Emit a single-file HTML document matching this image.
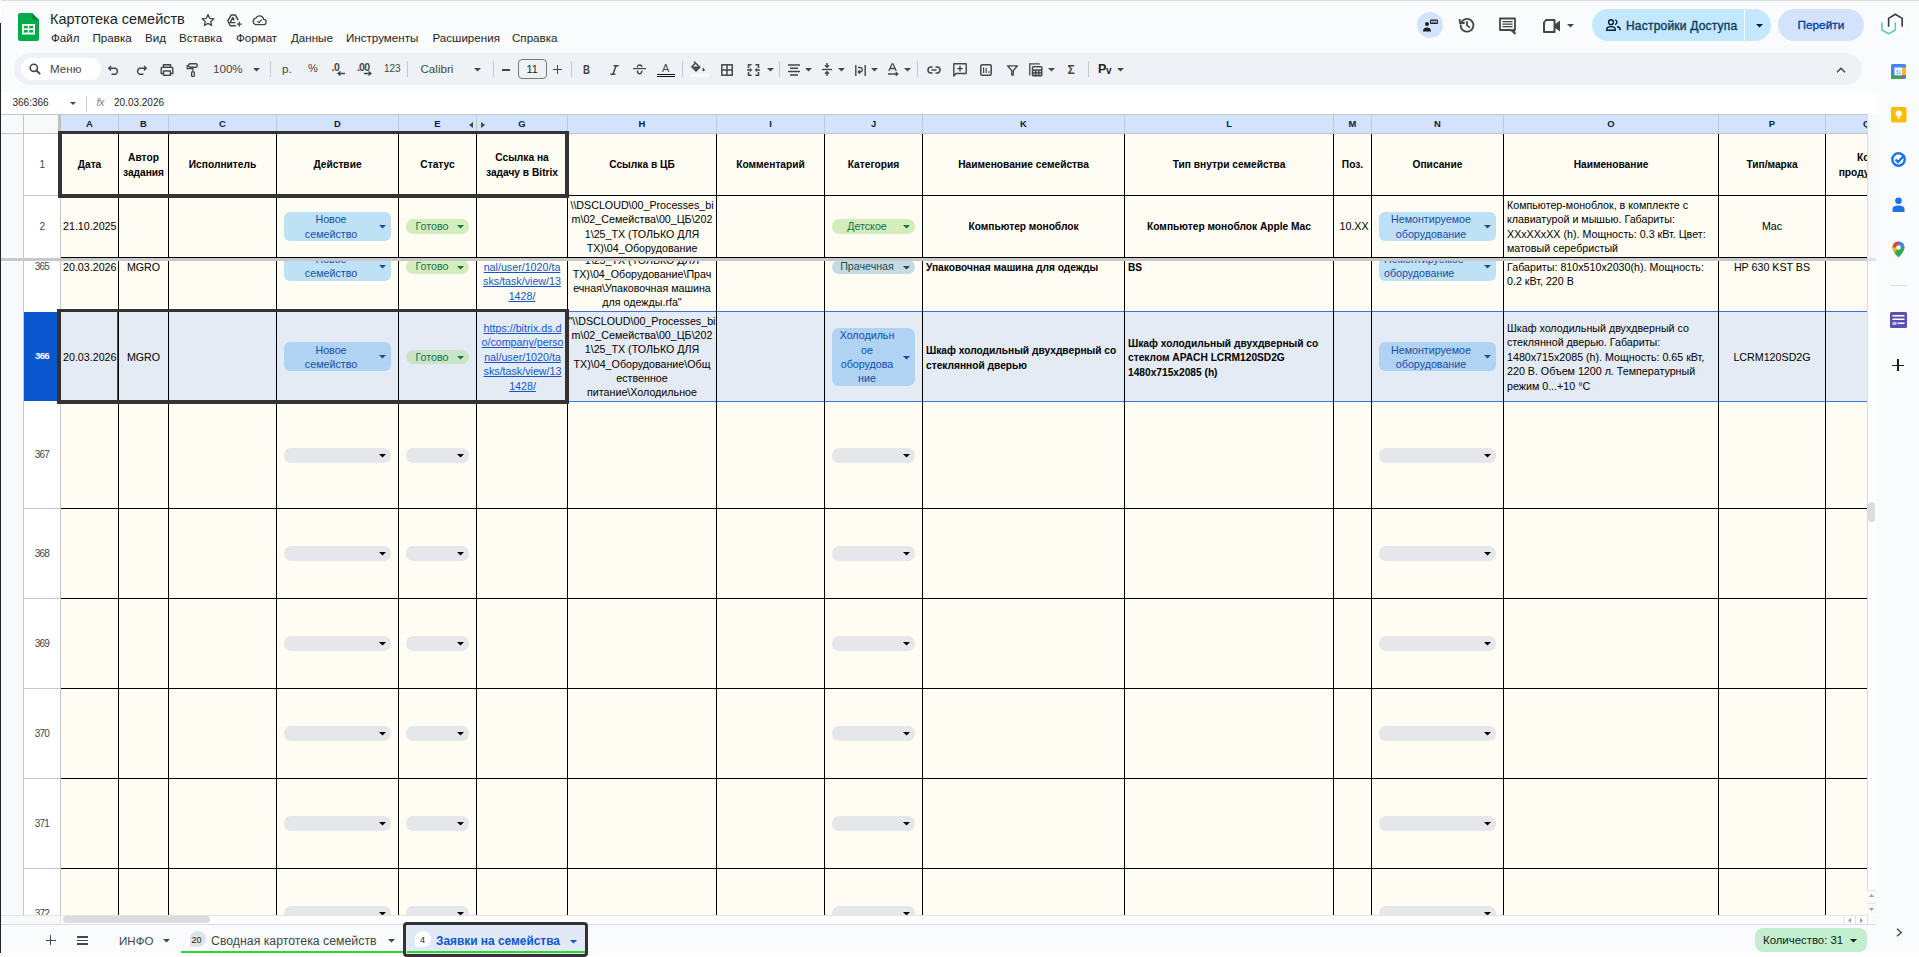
<!DOCTYPE html><html><head><meta charset="utf-8"><style>
html,body{margin:0;padding:0;}
body{width:1919px;height:957px;overflow:hidden;position:relative;background:#f9fbfd;font-family:"Liberation Sans",sans-serif;}
div{position:absolute;box-sizing:border-box;}
.t{white-space:pre;line-height:1;}
svg{position:absolute;overflow:visible;}
</style></head><body>
<div style="left:1px;top:0px;width:1918px;height:1px;background:#dedcdc"></div>
<div style="left:0px;top:0px;width:1px;height:23px;background:#fff"></div>
<svg style="left:18px;top:13px" width="21" height="28" viewBox="0 0 21 28">
<path d="M2 0H14L21 7V26Q21 28 19 28H2Q0 28 0 26V2Q0 0 2 0Z" fill="#00ac47"/>
<path d="M14 0L21 7H16Q14 7 14 5Z" fill="#008a34"/>
<rect x="4" y="11" width="13" height="10.5" fill="#fff"/>
<rect x="5.8" y="12.8" width="4" height="2.6" fill="#00ac47"/><rect x="11.2" y="12.8" width="4" height="2.6" fill="#00ac47"/>
<rect x="5.8" y="17" width="4" height="2.6" fill="#00ac47"/><rect x="11.2" y="17" width="4" height="2.6" fill="#00ac47"/>
</svg>
<div class="t" style="left:50px;top:12px;font-size:14.5px;color:#1f1f1f">Картотека семейств</div>
<svg style="left:201px;top:13px" width="14" height="14" viewBox="0 0 24 24"><path d="M12 2.5l2.9 6.6 7.1.6-5.4 4.7 1.6 7-6.2-3.7-6.2 3.7 1.6-7L2 9.7l7.1-.6z" fill="none" stroke="#444746" stroke-width="2.2" stroke-linejoin="round"/></svg>
<svg style="left:227px;top:14px" width="15" height="13" viewBox="0 0 15 13"><path d="M11.2 6.2L8.3 0.9H4.3L0.9 6.6L3.2 11.8H9" fill="none" stroke="#444746" stroke-width="1.5" stroke-linejoin="round"/><path d="M7.2 6.4L5.7 3.6L3.2 8.6H8.5" fill="none" stroke="#444746" stroke-width="1.4" stroke-linejoin="round"/><path d="M12.3 7.8V12.6M9.9 10.2H14.7" stroke="#444746" stroke-width="1.3"/></svg>
<svg style="left:252px;top:15px" width="15" height="10" viewBox="0 0 24 17"><path d="M6 16.5h12.5a4.5 4.5 0 0 0 .5-9 7 7 0 0 0-13.3-2A5.6 5.6 0 0 0 6 16.5z" fill="none" stroke="#444746" stroke-width="2.2"/><path d="M8.5 10.5l2.5 2.5 5-5" fill="none" stroke="#444746" stroke-width="2"/></svg>
<div class="t" style="left:51px;top:32px;font-size:11.6px;color:#1f1f1f">Файл</div>
<div class="t" style="left:92.5px;top:32px;font-size:11.6px;color:#1f1f1f">Правка</div>
<div class="t" style="left:145px;top:32px;font-size:11.6px;color:#1f1f1f">Вид</div>
<div class="t" style="left:179px;top:32px;font-size:11.6px;color:#1f1f1f">Вставка</div>
<div class="t" style="left:236px;top:32px;font-size:11.6px;color:#1f1f1f">Формат</div>
<div class="t" style="left:291px;top:32px;font-size:11.6px;color:#1f1f1f">Данные</div>
<div class="t" style="left:346px;top:32px;font-size:11.6px;color:#1f1f1f">Инструменты</div>
<div class="t" style="left:432.5px;top:32px;font-size:11.6px;color:#1f1f1f">Расширения</div>
<div class="t" style="left:512px;top:32px;font-size:11.6px;color:#1f1f1f">Справка</div>
<div style="left:1417px;top:12px;width:26px;height:26px;border-radius:13px;background:#d3e3fd"></div>
<svg style="left:1423px;top:19px" width="15" height="13" viewBox="0 0 15 13"><circle cx="4" cy="5" r="2" fill="#1f1f1f"/><path d="M0 12.5Q0 8.5 4 8.5Q8 8.5 8 12.5Z" fill="#1f1f1f"/><rect x="7" y="0.5" width="8" height="4.5" rx="1" fill="#1f1f1f"/><rect x="8.2" y="1.7" width="1.5" height="2" fill="#d3e3fd"/><rect x="10.3" y="1.7" width="1.5" height="2" fill="#d3e3fd"/><rect x="12.4" y="1.7" width="1.5" height="2" fill="#d3e3fd"/></svg>
<svg style="left:1458px;top:16px" width="18" height="18" viewBox="0 0 24 24"><path d="M4.2 9A8.5 8.5 0 1 1 3.5 12" fill="none" stroke="#444746" stroke-width="2.4"/><path d="M1.5 5.5V11H7" fill="none" stroke="#444746" stroke-width="0"/><path d="M2 4l1 6 6-1" fill="none" stroke="#444746" stroke-width="2.4" stroke-linejoin="round"/><path d="M12 7v5.5l4 3" fill="none" stroke="#444746" stroke-width="2.4"/></svg>
<svg style="left:1499px;top:17px" width="17" height="17" viewBox="0 0 17 17"><path d="M1 1.5h15v11.5h-2l2 3.5-4-3.5H1z" fill="none" stroke="#444746" stroke-width="1.8" stroke-linejoin="round"/><rect x="3.5" y="4" width="10" height="1.3" fill="#444746"/><rect x="3.5" y="6.5" width="10" height="1.3" fill="#444746"/><rect x="3.5" y="9" width="10" height="1.3" fill="#444746"/></svg>
<svg style="left:1542px;top:19px" width="19" height="14" viewBox="0 0 19 14"><path d="M4 1h8.5v12H2V3.5z" fill="none" stroke="#444746" stroke-width="2" stroke-linejoin="round"/><path d="M12.5 5.5L18 1.5v11l-5.5-4z" fill="#444746"/></svg>
<svg style="left:1567px;top:24px" width="7" height="4" viewBox="0 0 7 4"><path d="M0 0h7L3.5 3.5z" fill="#444746"/></svg>
<div style="left:1592px;top:9px;width:179px;height:32px;border-radius:16px;background:#c2e7ff"></div>
<div style="left:1744px;top:9px;width:1px;height:32px;background:#f4fbff"></div>
<svg style="left:1606px;top:19px" width="15" height="12" viewBox="0 0 15 12"><circle cx="5" cy="3.2" r="2.4" fill="none" stroke="#001d35" stroke-width="1.4"/><path d="M0.8 11.3V10Q0.8 7.6 5 7.6Q9.2 7.6 9.2 10V11.3Z" fill="none" stroke="#001d35" stroke-width="1.4"/><path d="M9 0.9A2.4 2.4 0 0 1 9 5.6M11 7.8Q14 8.2 14 10V11.3" fill="none" stroke="#001d35" stroke-width="1.4"/></svg>
<div class="t" style="left:1626px;top:19.5px;font-size:12px;color:#0b3a5a;letter-spacing:0.2px;-webkit-text-stroke:0.35px #0b3a5a">Настройки Доступа</div>
<svg style="left:1756px;top:23.5px" width="7" height="4" viewBox="0 0 7 4"><path d="M0 0h7L3.5 3.5z" fill="#001d35"/></svg>
<div style="left:1778px;top:9px;width:86px;height:32px;border-radius:16px;background:#d3e3fd"></div>
<div class="t" style="left:1797.5px;top:19.5px;font-size:11.8px;color:#0842a0;-webkit-text-stroke:0.35px #0842a0">Перейти</div>
<div style="left:1878.5px;top:11.5px;width:26.5px;height:26.5px;border-radius:13.25px;background:#ffffff"></div>
<svg style="left:1879px;top:11px" width="26" height="26" viewBox="0 0 26 26"><path d="M9.6 15.7V7.4L16.3 3.2L23.2 7.4V15.7" fill="none" stroke="#2f3b43" stroke-width="1.6"/><path d="M2.9 11.3V19L9.6 22.8L16.3 19V11.3" fill="none" stroke="#5bc7d3" stroke-width="1.6"/></svg>
<div style="left:14px;top:53px;width:1848px;height:32px;border-radius:16px;background:#eef2f7"></div>
<div style="left:21px;top:58px;width:80px;height:22px;border-radius:11px;background:#fff"></div>
<svg style="left:29px;top:63px" width="12" height="12" viewBox="0 0 12 12"><circle cx="4.8" cy="4.8" r="3.6" fill="none" stroke="#444746" stroke-width="1.6"/><path d="M7.5 7.5L11.2 11.2" stroke="#444746" stroke-width="1.8"/></svg>
<div class="t" style="left:50px;top:63px;font-size:11.6px;color:#444746">Меню</div>
<svg style="left:108px;top:65px" width="12" height="10" viewBox="0 0 12 10"><path d="M3 1L0.8 3.3 3 5.6" fill="none" stroke="#444746" stroke-width="1.5"/><path d="M1 3.3H7.5A3.2 3.2 0 0 1 7.5 9.2H3.5" fill="none" stroke="#444746" stroke-width="1.5"/></svg>
<svg style="left:135px;top:65px" width="12" height="10" viewBox="0 0 12 10" ><g transform="translate(12,0) scale(-1,1)"><path d="M3 1L0.8 3.3 3 5.6" fill="none" stroke="#444746" stroke-width="1.5"/><path d="M1 3.3H7.5A3.2 3.2 0 0 1 7.5 9.2H3.5" fill="none" stroke="#444746" stroke-width="1.5"/></g></svg>
<svg style="left:160px;top:64px" width="14" height="12" viewBox="0 0 14 12"><path d="M3.5 3V0.8H10.5V3" fill="none" stroke="#444746" stroke-width="1.4"/><path d="M3 9.5H1.2V4.5Q1.2 3.2 2.5 3.2H11.5Q12.8 3.2 12.8 4.5V9.5H11" fill="none" stroke="#444746" stroke-width="1.4"/><rect x="3.6" y="7" width="6.8" height="4.3" fill="none" stroke="#444746" stroke-width="1.4"/></svg>
<svg style="left:186px;top:63px" width="12" height="14" viewBox="0 0 12 14"><rect x="2.7" y="0.8" width="8.5" height="3.4" rx="1.1" fill="none" stroke="#444746" stroke-width="1.4"/><path d="M2.7 2.5H1.1V5.6H6.9V8.6" fill="none" stroke="#444746" stroke-width="1.2"/><rect x="5.6" y="8.9" width="2.7" height="4.4" rx="0.6" fill="none" stroke="#444746" stroke-width="1.3"/></svg>
<div class="t" style="left:213px;top:63px;font-size:11.6px;color:#444746">100%</div>
<svg style="left:253px;top:68px" width="7" height="4" viewBox="0 0 7 4"><path d="M0 0h7L3.5 3.5z" fill="#444746"/></svg>
<div style="left:270px;top:61px;width:1px;height:16px;background:#c7c7c7"></div>
<div class="t" style="left:282px;top:63px;font-size:11.6px;color:#444746">р.</div>
<div class="t" style="left:308px;top:63px;font-size:11px;color:#444746">%</div>
<div class="t" style="left:331.5px;top:62px;font-size:10.5px;color:#444746;font-weight:bold;letter-spacing:-0.5px">.0</div>
<svg style="left:337px;top:71px" width="8" height="5" viewBox="0 0 8 5"><path d="M8 2.5H1.5M3.5 0.5L1 2.5 3.5 4.5" fill="none" stroke="#444746" stroke-width="1.3"/></svg>
<div class="t" style="left:357px;top:62px;font-size:10.5px;color:#444746;font-weight:bold;letter-spacing:-0.8px">.00</div>
<svg style="left:364px;top:71px" width="8" height="5" viewBox="0 0 8 5"><path d="M0 2.5H6.5M4.5 0.5L7 2.5 4.5 4.5" fill="none" stroke="#444746" stroke-width="1.3"/></svg>
<div class="t" style="left:384px;top:64px;font-size:10px;color:#444746">123</div>
<div style="left:407px;top:61px;width:1px;height:16px;background:#c7c7c7"></div>
<div class="t" style="left:420.5px;top:63px;font-size:11.6px;color:#444746">Calibri</div>
<svg style="left:474px;top:68px" width="7" height="4" viewBox="0 0 7 4"><path d="M0 0h7L3.5 3.5z" fill="#444746"/></svg>
<div style="left:493px;top:61px;width:1px;height:16px;background:#c7c7c7"></div>
<div style="left:502px;top:69px;width:8px;height:1.5px;background:#444746"></div>
<div style="left:518px;top:59px;width:29px;height:20px;border:1px solid #747775;border-radius:4px"></div>
<div class="t" style="left:526.5px;top:64px;font-size:11px;color:#1f1f1f">11</div>
<div style="left:553px;top:68.5px;width:9px;height:1.5px;background:#444746"></div>
<div style="left:556.8px;top:64.8px;width:1.5px;height:9px;background:#444746"></div>
<div style="left:571px;top:61px;width:1px;height:16px;background:#c7c7c7"></div>
<div class="t" style="left:583px;top:62.5px;font-size:13px;font-weight:bold;color:#444746;transform:scaleX(0.74);transform-origin:left top">B</div>
<svg style="left:609.5px;top:65px" width="9" height="10" viewBox="0 0 9 10"><path d="M3.6 0.7H8.7M0.3 9.3H5.4M6.1 0.7L2.9 9.3" fill="none" stroke="#444746" stroke-width="1.5"/></svg>
<svg style="left:633px;top:64px" width="13" height="11" viewBox="0 0 13 11"><path d="M0 4.6H13" stroke="#444746" stroke-width="1.2"/><path d="M4.4 3.4Q4.4 1 6.6 1Q8.8 1 8.8 3" fill="none" stroke="#444746" stroke-width="1.4"/><path d="M4.4 6.6Q4.4 9.9 6.6 9.9Q8.8 9.9 8.8 6.8" fill="none" stroke="#444746" stroke-width="1.4"/></svg>
<div class="t" style="left:662px;top:62.5px;font-size:11px;color:#444746">A</div>
<div style="left:657px;top:73.8px;width:18px;height:1.3px;background:#111"></div>
<div style="left:657px;top:76px;width:18px;height:1.3px;background:#111"></div>
<div style="left:682px;top:61px;width:1px;height:16px;background:#c7c7c7"></div>
<svg style="left:691px;top:60px" width="15" height="12" viewBox="0 0 15 12"><path d="M3 1.5L8.8 7.3 5 11 0.8 6.8 4.6 3" fill="none" stroke="#444746" stroke-width="1.4"/><path d="M1.5 6.5H9L5 10.5z" fill="#444746"/><path d="M12.5 7.5Q11.3 9.3 11.3 10Q11.3 11.3 12.5 11.3Q13.7 11.3 13.7 10Q13.7 9.3 12.5 7.5z" fill="#444746"/></svg>
<div style="left:690px;top:74px;width:19px;height:3px;background:#fffbf2"></div>
<svg style="left:721px;top:64px" width="12" height="12" viewBox="0 0 12 12"><rect x="0.8" y="0.8" width="10.4" height="10.4" fill="none" stroke="#444746" stroke-width="1.5"/><path d="M6 0.8V11.2M0.8 6H11.2" stroke="#444746" stroke-width="1.5"/></svg>
<svg style="left:747px;top:64px" width="13" height="12" viewBox="0 0 13 12"><path d="M4.6 0.7H1.5V4M1.5 8V11.3H4.6M8.4 0.7H11.5V4M11.5 8V11.3H8.4" fill="none" stroke="#444746" stroke-width="1.5"/><path d="M0 6H3M13 6H10" stroke="#444746" stroke-width="1.3"/><path d="M2.8 3.8L5.2 6 2.8 8.2zM10.2 3.8L7.8 6 10.2 8.2z" fill="#444746"/></svg>
<svg style="left:767px;top:68px" width="7" height="4" viewBox="0 0 7 4"><path d="M0 0h7L3.5 3.5z" fill="#444746"/></svg>
<div style="left:779px;top:61px;width:1px;height:16px;background:#c7c7c7"></div>
<svg style="left:788px;top:64px" width="12" height="12" viewBox="0 0 12 12"><path d="M0 1H12M2 4.3H10M0 7.6H12M2 10.9H10" stroke="#444746" stroke-width="1.5"/></svg>
<svg style="left:805px;top:68px" width="7" height="4" viewBox="0 0 7 4"><path d="M0 0h7L3.5 3.5z" fill="#444746"/></svg>
<svg style="left:822px;top:63px" width="10" height="13" viewBox="0 0 10 13"><path d="M0 6.5H10" stroke="#444746" stroke-width="1.4"/><path d="M5 0V4M3 2.3L5 4.3 7 2.3M5 13V9M3 10.7L5 8.7 7 10.7" fill="none" stroke="#444746" stroke-width="1.4"/></svg>
<svg style="left:838px;top:68px" width="7" height="4" viewBox="0 0 7 4"><path d="M0 0h7L3.5 3.5z" fill="#444746"/></svg>
<svg style="left:855px;top:65px" width="11" height="11" viewBox="0 0 11 11"><path d="M0.8 0V11M10.2 0V11" stroke="#444746" stroke-width="1.4"/><path d="M3 2.5H5.5A2.3 2.3 0 0 1 5.5 7H3.5M5 5.3L3.3 7 5 8.7" fill="none" stroke="#444746" stroke-width="1.3"/></svg>
<svg style="left:871px;top:68px" width="7" height="4" viewBox="0 0 7 4"><path d="M0 0h7L3.5 3.5z" fill="#444746"/></svg>
<svg style="left:888px;top:63px" width="11" height="13" viewBox="0 0 11 13"><path d="M0.8 8L4 0.8H5L8.2 8M2 5.5H7" fill="none" stroke="#444746" stroke-width="1.3"/><path d="M0 11H9.5M7.8 9.3L9.7 11 7.8 12.7" fill="none" stroke="#444746" stroke-width="1.3"/></svg>
<svg style="left:904px;top:68px" width="7" height="4" viewBox="0 0 7 4"><path d="M0 0h7L3.5 3.5z" fill="#444746"/></svg>
<div style="left:917px;top:61px;width:1px;height:16px;background:#c7c7c7"></div>
<svg style="left:927px;top:66px" width="14" height="8" viewBox="0 0 14 8"><path d="M5.5 1H4A3 3 0 0 0 4 7H5.5M8.5 1H10A3 3 0 0 1 10 7H8.5M4.5 4H9.5" fill="none" stroke="#444746" stroke-width="1.5"/></svg>
<svg style="left:953px;top:63px" width="14" height="14" viewBox="0 0 14 14"><path d="M0.8 0.8H13.2V10.5H3L0.8 13z" fill="none" stroke="#444746" stroke-width="1.4" stroke-linejoin="round"/><path d="M7 2.8V8.5M4.2 5.6H9.8" stroke="#444746" stroke-width="1.4"/></svg>
<svg style="left:980px;top:64px" width="12" height="12" viewBox="0 0 12 12"><rect x="0.8" y="0.8" width="10.4" height="10.4" rx="1.3" fill="none" stroke="#444746" stroke-width="1.5"/><path d="M3.6 3.6V9M6.2 4V9M8.9 7.2V9" stroke="#444746" stroke-width="1.2"/></svg>
<svg style="left:1007px;top:65px" width="11" height="10" viewBox="0 0 11 10"><path d="M0.5 0.8H10.5L6.3 5.5V10H4.7V5.5z" fill="none" stroke="#444746" stroke-width="1.3" stroke-linejoin="round"/></svg>
<svg style="left:1029px;top:63px" width="14" height="14" viewBox="0 0 14 14"><path d="M0.8 12.5V0.8H10.8" fill="none" stroke="#444746" stroke-width="1.3"/><rect x="2.8" y="3" width="10.7" height="10.5" rx="1.5" fill="#444746"/><rect x="4.2" y="4.4" width="7.9" height="1.9" fill="#eef2f7"/><rect x="4.4" y="7.8" width="1.4" height="1.3" fill="#eef2f7"/><rect x="7.45" y="7.8" width="1.4" height="1.3" fill="#eef2f7"/><rect x="10.5" y="7.8" width="1.4" height="1.3" fill="#eef2f7"/><rect x="4.4" y="10.5" width="1.4" height="1.3" fill="#eef2f7"/><rect x="7.45" y="10.5" width="1.4" height="1.3" fill="#eef2f7"/><rect x="10.5" y="10.5" width="1.4" height="1.3" fill="#eef2f7"/></svg>
<svg style="left:1048px;top:68px" width="7" height="4" viewBox="0 0 7 4"><path d="M0 0h7L3.5 3.5z" fill="#444746"/></svg>
<div class="t" style="left:1067.5px;top:64px;font-size:12px;color:#444746;font-weight:bold">Σ</div>
<div style="left:1088px;top:61px;width:1px;height:16px;background:#c7c7c7"></div>
<div class="t" style="left:1098px;top:62.5px;font-size:12.5px;font-weight:bold;color:#1f1f1f">Р</div>
<div class="t" style="left:1106px;top:65.5px;font-size:10px;font-weight:bold;color:#1f1f1f">v</div>
<svg style="left:1117px;top:68px" width="7" height="4" viewBox="0 0 7 4"><path d="M0 0h7L3.5 3.5z" fill="#444746"/></svg>
<svg style="left:1836px;top:67px" width="10" height="6" viewBox="0 0 10 6"><path d="M1 5.2L5 1.2 9 5.2" fill="none" stroke="#444746" stroke-width="1.5"/></svg>
<div style="left:1px;top:92px;width:1875px;height:22px;background:#fff"></div>
<div class="t" style="left:12.5px;top:98px;font-size:10px;color:#1f1f1f">366:366</div>
<svg style="left:70px;top:102px" width="6" height="3.5" viewBox="0 0 7 4"><path d="M0 0h7L3.5 3.5z" fill="#444746"/></svg>
<div style="left:86px;top:97px;width:1px;height:14px;background:#c7c7c7"></div>
<div class="t" style="left:96.5px;top:97px;font-size:11px;font-style:italic;color:#80868b;letter-spacing:-0.5px">fx</div>
<div class="t" style="left:114px;top:98px;font-size:10px;color:#1f1f1f">20.03.2026</div>
<div style="left:0;top:0;width:1919px;height:957px;overflow:hidden">
<div style="left:1px;top:114px;width:22px;height:801px;background:#f8f9fa"></div>
<div style="left:23px;top:114px;width:1px;height:801px;background:#c4c7c5"></div>
<div style="left:24px;top:134px;width:36px;height:781px;background:#fff"></div>
<div style="left:24px;top:115px;width:36px;height:18px;background:#f8f9fa"></div>
<div style="left:61px;top:115px;width:1806px;height:18px;background:#d3e3fd"></div>
<div style="left:58px;top:115px;width:3px;height:18px;background:#c0c0c0"></div>
<div style="left:1px;top:114px;width:1866px;height:1px;background:#c4c7c5"></div>
<div style="left:1px;top:133px;width:1866px;height:1px;background:#c4c7c5"></div>
<div style="left:60px;top:134px;width:1px;height:781px;background:#c4c7c5"></div>
<div style="left:61px;top:134px;width:1806px;height:781px;background:#fefcf3"></div>
<div style="left:61px;top:312px;width:1806px;height:89px;background:#e5ebf4"></div>
<div style="left:61px;top:311px;width:1806px;height:1px;background:#3a74e2"></div>
<div style="left:61px;top:401px;width:1806px;height:1px;background:#3a74e2"></div>
<div style="left:24px;top:312px;width:33px;height:89px;background:#0b57d0"></div>
<div style="left:118px;top:115px;width:1px;height:18px;background:#c4c7c5"></div>
<div style="left:168px;top:115px;width:1px;height:18px;background:#c4c7c5"></div>
<div style="left:276px;top:115px;width:1px;height:18px;background:#c4c7c5"></div>
<div style="left:398px;top:115px;width:1px;height:18px;background:#c4c7c5"></div>
<div style="left:476px;top:115px;width:1px;height:18px;background:#c4c7c5"></div>
<div style="left:567px;top:115px;width:1px;height:18px;background:#c4c7c5"></div>
<div style="left:716px;top:115px;width:1px;height:18px;background:#c4c7c5"></div>
<div style="left:824px;top:115px;width:1px;height:18px;background:#c4c7c5"></div>
<div style="left:922px;top:115px;width:1px;height:18px;background:#c4c7c5"></div>
<div style="left:1124px;top:115px;width:1px;height:18px;background:#c4c7c5"></div>
<div style="left:1333px;top:115px;width:1px;height:18px;background:#c4c7c5"></div>
<div style="left:1371px;top:115px;width:1px;height:18px;background:#c4c7c5"></div>
<div style="left:1503px;top:115px;width:1px;height:18px;background:#c4c7c5"></div>
<div style="left:1718px;top:115px;width:1px;height:18px;background:#c4c7c5"></div>
<div style="left:1825px;top:115px;width:1px;height:18px;background:#c4c7c5"></div>
<div style="left:118px;top:134px;width:1px;height:781px;background:#000"></div>
<div style="left:168px;top:134px;width:1px;height:781px;background:#000"></div>
<div style="left:276px;top:134px;width:1px;height:781px;background:#000"></div>
<div style="left:398px;top:134px;width:1px;height:781px;background:#000"></div>
<div style="left:476px;top:134px;width:1px;height:781px;background:#000"></div>
<div style="left:567px;top:134px;width:1px;height:781px;background:#000"></div>
<div style="left:716px;top:134px;width:1px;height:781px;background:#000"></div>
<div style="left:824px;top:134px;width:1px;height:781px;background:#000"></div>
<div style="left:922px;top:134px;width:1px;height:781px;background:#000"></div>
<div style="left:1124px;top:134px;width:1px;height:781px;background:#000"></div>
<div style="left:1333px;top:134px;width:1px;height:781px;background:#000"></div>
<div style="left:1371px;top:134px;width:1px;height:781px;background:#000"></div>
<div style="left:1503px;top:134px;width:1px;height:781px;background:#000"></div>
<div style="left:1718px;top:134px;width:1px;height:781px;background:#000"></div>
<div style="left:1825px;top:134px;width:1px;height:781px;background:#000"></div>
<div style="left:61px;top:195px;width:1806px;height:1px;background:#000"></div>
<div style="left:61px;top:257px;width:1806px;height:1px;background:#000"></div>
<div style="left:61px;top:508px;width:1806px;height:1px;background:#000"></div>
<div style="left:61px;top:598px;width:1806px;height:1px;background:#000"></div>
<div style="left:61px;top:688px;width:1806px;height:1px;background:#000"></div>
<div style="left:61px;top:778px;width:1806px;height:1px;background:#000"></div>
<div style="left:61px;top:868px;width:1806px;height:1px;background:#000"></div>
<div style="left:24px;top:195px;width:36px;height:1px;background:#c4c7c5"></div>
<div style="left:24px;top:508px;width:36px;height:1px;background:#c4c7c5"></div>
<div style="left:24px;top:598px;width:36px;height:1px;background:#c4c7c5"></div>
<div style="left:24px;top:688px;width:36px;height:1px;background:#c4c7c5"></div>
<div style="left:24px;top:778px;width:36px;height:1px;background:#c4c7c5"></div>
<div style="left:24px;top:868px;width:36px;height:1px;background:#c4c7c5"></div>
<div style="left:1px;top:258px;width:1875px;height:3px;background:#c8c8c8"></div>
<div style="left:117px;top:312px;width:1px;height:89px;background:#0b57d0"></div>
<div class="t" style="left:69.50px;top:119.04px;width:40px;text-align:center;font-size:9.4px;font-weight:bold;color:#041e49">A</div>
<div class="t" style="left:123.50px;top:119.04px;width:40px;text-align:center;font-size:9.4px;font-weight:bold;color:#041e49">B</div>
<div class="t" style="left:202.50px;top:119.04px;width:40px;text-align:center;font-size:9.4px;font-weight:bold;color:#041e49">C</div>
<div class="t" style="left:317.50px;top:119.04px;width:40px;text-align:center;font-size:9.4px;font-weight:bold;color:#041e49">D</div>
<div class="t" style="left:417.50px;top:119.04px;width:40px;text-align:center;font-size:9.4px;font-weight:bold;color:#041e49">E</div>
<div class="t" style="left:502.00px;top:119.04px;width:40px;text-align:center;font-size:9.4px;font-weight:bold;color:#041e49">G</div>
<div class="t" style="left:622.00px;top:119.04px;width:40px;text-align:center;font-size:9.4px;font-weight:bold;color:#041e49">H</div>
<div class="t" style="left:750.50px;top:119.04px;width:40px;text-align:center;font-size:9.4px;font-weight:bold;color:#041e49">I</div>
<div class="t" style="left:853.50px;top:119.04px;width:40px;text-align:center;font-size:9.4px;font-weight:bold;color:#041e49">J</div>
<div class="t" style="left:1003.50px;top:119.04px;width:40px;text-align:center;font-size:9.4px;font-weight:bold;color:#041e49">K</div>
<div class="t" style="left:1209.00px;top:119.04px;width:40px;text-align:center;font-size:9.4px;font-weight:bold;color:#041e49">L</div>
<div class="t" style="left:1332.50px;top:119.04px;width:40px;text-align:center;font-size:9.4px;font-weight:bold;color:#041e49">M</div>
<div class="t" style="left:1417.50px;top:119.04px;width:40px;text-align:center;font-size:9.4px;font-weight:bold;color:#041e49">N</div>
<div class="t" style="left:1591.00px;top:119.04px;width:40px;text-align:center;font-size:9.4px;font-weight:bold;color:#041e49">O</div>
<div class="t" style="left:1752.00px;top:119.04px;width:40px;text-align:center;font-size:9.4px;font-weight:bold;color:#041e49">P</div>
<svg style="left:469px;top:122px" width="4" height="6" viewBox="0 0 4 6"><path d="M4 0V6L0 3z" fill="#444746"/></svg>
<svg style="left:481px;top:122px" width="4" height="6" viewBox="0 0 4 6"><path d="M0 0V6L4 3z" fill="#444746"/></svg>
<div class="t" style="left:27.00px;top:159.53px;width:30px;text-align:center;font-size:10px;color:#444746;letter-spacing:-0.8px">1</div>
<div class="t" style="left:27.00px;top:221.53px;width:30px;text-align:center;font-size:10px;color:#444746;letter-spacing:-0.8px">2</div>
<div class="t" style="left:27.00px;top:449.54px;width:30px;text-align:center;font-size:10px;color:#444746;letter-spacing:-0.8px">367</div>
<div class="t" style="left:27.00px;top:548.53px;width:30px;text-align:center;font-size:10px;color:#444746;letter-spacing:-0.8px">368</div>
<div class="t" style="left:27.00px;top:638.53px;width:30px;text-align:center;font-size:10px;color:#444746;letter-spacing:-0.8px">369</div>
<div class="t" style="left:27.00px;top:728.53px;width:30px;text-align:center;font-size:10px;color:#444746;letter-spacing:-0.8px">370</div>
<div class="t" style="left:27.00px;top:818.53px;width:30px;text-align:center;font-size:10px;color:#444746;letter-spacing:-0.8px">371</div>
<div class="t" style="left:27.00px;top:908.53px;width:30px;text-align:center;font-size:10px;color:#444746;letter-spacing:-0.8px">372</div>
<div class="t" style="left:27.00px;top:261.54px;width:30px;text-align:center;font-size:10px;color:#444746;letter-spacing:-0.8px">365</div>
<div class="t" style="left:27.00px;top:351.17px;width:30px;text-align:center;font-size:9.6px;color:#fff;font-weight:bold;letter-spacing:-0.6px">366</div>
<div class="t" style="left:59.50px;top:160.17px;width:60px;text-align:center;font-size:10.2px;font-weight:bold;color:#000">Дата</div>
<div class="t" style="left:113.50px;top:153.17px;width:60px;text-align:center;font-size:10.2px;font-weight:bold;color:#000">Автор</div>
<div class="t" style="left:113.50px;top:167.67px;width:60px;text-align:center;font-size:10.2px;font-weight:bold;color:#000">задания</div>
<div class="t" style="left:167.50px;top:160.17px;width:110px;text-align:center;font-size:10.2px;font-weight:bold;color:#000">Исполнитель</div>
<div class="t" style="left:277.50px;top:160.17px;width:120px;text-align:center;font-size:10.2px;font-weight:bold;color:#000">Действие</div>
<div class="t" style="left:397.50px;top:160.17px;width:80px;text-align:center;font-size:10.2px;font-weight:bold;color:#000">Статус</div>
<div class="t" style="left:477.00px;top:153.17px;width:90px;text-align:center;font-size:10.2px;font-weight:bold;color:#000">Ссылка на</div>
<div class="t" style="left:477.00px;top:167.67px;width:90px;text-align:center;font-size:10.2px;font-weight:bold;color:#000">задачу в Bitrix</div>
<div class="t" style="left:567.00px;top:160.17px;width:150px;text-align:center;font-size:10.2px;font-weight:bold;color:#000">Ссылка в ЦБ</div>
<div class="t" style="left:715.50px;top:160.17px;width:110px;text-align:center;font-size:10.2px;font-weight:bold;color:#000">Комментарий</div>
<div class="t" style="left:823.50px;top:160.17px;width:100px;text-align:center;font-size:10.2px;font-weight:bold;color:#000">Категория</div>
<div class="t" style="left:923.50px;top:160.17px;width:200px;text-align:center;font-size:10.2px;font-weight:bold;color:#000">Наименование семейства</div>
<div class="t" style="left:1129.00px;top:160.17px;width:200px;text-align:center;font-size:10.2px;font-weight:bold;color:#000">Тип внутри семейства</div>
<div class="t" style="left:1332.50px;top:160.17px;width:40px;text-align:center;font-size:10.2px;font-weight:bold;color:#000">Поз.</div>
<div class="t" style="left:1372.50px;top:160.17px;width:130px;text-align:center;font-size:10.2px;font-weight:bold;color:#000">Описание</div>
<div class="t" style="left:1506.00px;top:160.17px;width:210px;text-align:center;font-size:10.2px;font-weight:bold;color:#000">Наименование</div>
<div class="t" style="left:1717.00px;top:160.17px;width:110px;text-align:center;font-size:10.2px;font-weight:bold;color:#000">Тип/марка</div>
<div style="left:1826px;top:114px;width:41px;height:86px;overflow:hidden"><div style="left:-1826px;top:-114px;width:1919px;height:957px">
<div class="t" style="left:1863.00px;top:119.04px;font-size:9.4px;font-weight:bold;color:#041e49">Q</div>
<div class="t" style="left:1857.00px;top:153.17px;font-size:10.2px;font-weight:bold;color:#000">Кол-во</div>
<div class="t" style="left:1838.70px;top:167.67px;font-size:10.2px;font-weight:bold;color:#000">продукции</div>
</div></div>
<div class="t" style="left:63.00px;top:220.94px;font-size:10.7px;color:#000">21.10.2025</div>
<div style="left:284px;top:212px;width:107px;height:29px;border-radius:6px;background:#bfe1f6"></div>
<svg style="left:378.5px;top:225.0px" width="7" height="4" viewBox="0 0 7 4"><path d="M0 0h7L3.5 3.5z" fill="#174ea6"/></svg>
<div class="t" style="left:261.00px;top:213.74px;width:140px;text-align:center;font-size:10.7px;color:#174ea6">Новое</div>
<div class="t" style="left:261.00px;top:228.74px;width:140px;text-align:center;font-size:10.7px;color:#174ea6">семейство</div>
<div style="left:406px;top:219px;width:63px;height:15px;border-radius:7px;background:#d4edbc"></div>
<svg style="left:456.5px;top:225.0px" width="7" height="4" viewBox="0 0 7 4"><path d="M0 0h7L3.5 3.5z" fill="#11734b"/></svg>
<div class="t" style="left:362.00px;top:220.94px;width:140px;text-align:center;font-size:10.7px;color:#11734b">Готово</div>
<div class="t" style="left:562.00px;top:199.94px;width:160px;text-align:center;font-size:10.7px;color:#000">\\DSCLOUD\00_Processes_bi</div>
<div class="t" style="left:562.00px;top:214.44px;width:160px;text-align:center;font-size:10.7px;color:#000">m\02_Семейства\00_ЦБ\202</div>
<div class="t" style="left:562.00px;top:228.94px;width:160px;text-align:center;font-size:10.7px;color:#000">1\25_TX (ТОЛЬКО ДЛЯ</div>
<div class="t" style="left:562.00px;top:243.44px;width:160px;text-align:center;font-size:10.7px;color:#000">TX)\04_Оборудование</div>
<div style="left:832px;top:219px;width:83px;height:15px;border-radius:7px;background:#d4edbc"></div>
<svg style="left:902.5px;top:225.0px" width="7" height="4" viewBox="0 0 7 4"><path d="M0 0h7L3.5 3.5z" fill="#11734b"/></svg>
<div class="t" style="left:797.00px;top:220.94px;width:140px;text-align:center;font-size:10.7px;color:#11734b">Детское</div>
<div class="t" style="left:923.50px;top:222.17px;width:200px;text-align:center;font-size:10.2px;font-weight:bold;color:#000">Компьютер моноблок</div>
<div class="t" style="left:1125.00px;top:222.17px;width:208px;text-align:center;font-size:10.2px;font-weight:bold;color:#000">Компьютер моноблок Apple Mac</div>
<div class="t" style="left:1339.50px;top:220.94px;font-size:10.7px;color:#000">10.XX</div>
<div style="left:1379px;top:212px;width:117px;height:29px;border-radius:6px;background:#bfe1f6"></div>
<svg style="left:1483.5px;top:225.0px" width="7" height="4" viewBox="0 0 7 4"><path d="M0 0h7L3.5 3.5z" fill="#174ea6"/></svg>
<div class="t" style="left:1361.00px;top:213.74px;width:140px;text-align:center;font-size:10.7px;color:#174ea6">Немонтируемое</div>
<div class="t" style="left:1361.00px;top:228.74px;width:140px;text-align:center;font-size:10.7px;color:#174ea6">оборудование</div>
<div class="t" style="left:1507.00px;top:199.94px;font-size:10.7px;color:#000">Компьютер-моноблок, в комплекте с</div>
<div class="t" style="left:1507.00px;top:214.44px;font-size:10.7px;color:#000">клавиатурой и мышью. Габариты:</div>
<div class="t" style="left:1507.00px;top:228.94px;font-size:10.7px;color:#000">XXxXXxXX (h). Мощность: 0.3 кВт. Цвет:</div>
<div class="t" style="left:1507.00px;top:243.44px;font-size:10.7px;color:#000">матовый серебристый</div>
<div class="t" style="left:1722.00px;top:220.94px;width:100px;text-align:center;font-size:10.7px;color:#000">Mac</div>
<div style="left:0px;top:261px;width:1867px;height:50px;overflow:hidden"><div style="left:0px;top:-261px;width:1919px;height:957px">
<div class="t" style="left:63.00px;top:261.94px;font-size:10.7px;color:#000">20.03.2026</div>
<div class="t" style="left:118.50px;top:261.94px;width:50px;text-align:center;font-size:10.7px;color:#000">MGRO</div>
<div style="left:284px;top:252px;width:107px;height:29px;border-radius:6px;background:#bfe1f6"></div>
<svg style="left:378.5px;top:265.0px" width="7" height="4" viewBox="0 0 7 4"><path d="M0 0h7L3.5 3.5z" fill="#174ea6"/></svg>
<div class="t" style="left:261.00px;top:253.94px;width:140px;text-align:center;font-size:10.7px;color:#174ea6">Новое</div>
<div class="t" style="left:261.00px;top:268.44px;width:140px;text-align:center;font-size:10.7px;color:#174ea6">семейство</div>
<div style="left:406px;top:260px;width:63px;height:14px;border-radius:7.0px;background:#d4edbc"></div>
<svg style="left:456.5px;top:265.5px" width="7" height="4" viewBox="0 0 7 4"><path d="M0 0h7L3.5 3.5z" fill="#11734b"/></svg>
<div class="t" style="left:362.00px;top:261.44px;width:140px;text-align:center;font-size:10.7px;color:#11734b">Готово</div>
<div class="t" style="left:472.00px;top:261.94px;width:100px;text-align:center;font-size:10.7px;color:#1155cc;text-decoration:underline">nal/user/1020/ta</div>
<div class="t" style="left:472.00px;top:276.44px;width:100px;text-align:center;font-size:10.7px;color:#1155cc;text-decoration:underline">sks/task/view/13</div>
<div class="t" style="left:472.00px;top:290.94px;width:100px;text-align:center;font-size:10.7px;color:#1155cc;text-decoration:underline">1428/</div>
<div class="t" style="left:562.00px;top:254.64px;width:160px;text-align:center;font-size:10.7px;color:#000">1\25_TX (ТОЛЬКО ДЛЯ</div>
<div class="t" style="left:562.00px;top:268.84px;width:160px;text-align:center;font-size:10.7px;color:#000">TX)\04_Оборудование\Прач</div>
<div class="t" style="left:562.00px;top:283.04px;width:160px;text-align:center;font-size:10.7px;color:#000">ечная\Упаковочная машина</div>
<div class="t" style="left:562.00px;top:297.24px;width:160px;text-align:center;font-size:10.7px;color:#000">для одежды.rfa"</div>
<div style="left:832px;top:260px;width:83px;height:14px;border-radius:7.0px;background:#c6dbe1"></div>
<svg style="left:902.5px;top:265.5px" width="7" height="4" viewBox="0 0 7 4"><path d="M0 0h7L3.5 3.5z" fill="#1d4c5a"/></svg>
<div class="t" style="left:797.00px;top:261.44px;width:140px;text-align:center;font-size:10.7px;color:#1d4c5a">Прачечная</div>
<div class="t" style="left:926.00px;top:263.17px;font-size:10.2px;font-weight:bold;color:#000">Упаковочная машина для одежды</div>
<div class="t" style="left:1128.00px;top:263.17px;font-size:10.2px;font-weight:bold;color:#000">BS</div>
<div style="left:1379px;top:252px;width:117px;height:29px;border-radius:6px;background:#bfe1f6"></div>
<svg style="left:1483.5px;top:265.0px" width="7" height="4" viewBox="0 0 7 4"><path d="M0 0h7L3.5 3.5z" fill="#174ea6"/></svg>
<div class="t" style="left:1384.00px;top:253.94px;font-size:10.7px;color:#174ea6">Немонтируемое</div>
<div class="t" style="left:1384.00px;top:268.44px;font-size:10.7px;color:#174ea6">оборудование</div>
<div class="t" style="left:1507.00px;top:261.94px;font-size:10.7px;color:#000">Габариты: 810x510x2030(h). Мощность:</div>
<div class="t" style="left:1507.00px;top:276.44px;font-size:10.7px;color:#000">0.2 кВт, 220 В</div>
<div class="t" style="left:1722.00px;top:261.94px;width:100px;text-align:center;font-size:10.7px;color:#000">HP 630 KST BS</div>
</div></div>
<div class="t" style="left:63.00px;top:351.94px;font-size:10.7px;color:#000">20.03.2026</div>
<div class="t" style="left:118.50px;top:351.94px;width:50px;text-align:center;font-size:10.7px;color:#000">MGRO</div>
<div style="left:284px;top:342px;width:107px;height:29px;border-radius:6px;background:#b0d3f3"></div>
<svg style="left:378.5px;top:355.0px" width="7" height="4" viewBox="0 0 7 4"><path d="M0 0h7L3.5 3.5z" fill="#174ea6"/></svg>
<div class="t" style="left:261.00px;top:345.24px;width:140px;text-align:center;font-size:10.7px;color:#174ea6">Новое</div>
<div class="t" style="left:261.00px;top:359.44px;width:140px;text-align:center;font-size:10.7px;color:#174ea6">семейство</div>
<div style="left:406px;top:350px;width:63px;height:14px;border-radius:7.0px;background:#c9e5c5"></div>
<svg style="left:456.5px;top:355.5px" width="7" height="4" viewBox="0 0 7 4"><path d="M0 0h7L3.5 3.5z" fill="#11734b"/></svg>
<div class="t" style="left:362.00px;top:351.94px;width:140px;text-align:center;font-size:10.7px;color:#11734b">Готово</div>
<div class="t" style="left:472.50px;top:322.94px;width:100px;text-align:center;font-size:10.7px;color:#1155cc;text-decoration:underline">https://bitrix.ds.d</div>
<div class="t" style="left:472.50px;top:337.44px;width:100px;text-align:center;font-size:10.7px;color:#1155cc;text-decoration:underline">o/company/perso</div>
<div class="t" style="left:472.50px;top:351.94px;width:100px;text-align:center;font-size:10.7px;color:#1155cc;text-decoration:underline">nal/user/1020/ta</div>
<div class="t" style="left:472.50px;top:366.44px;width:100px;text-align:center;font-size:10.7px;color:#1155cc;text-decoration:underline">sks/task/view/13</div>
<div class="t" style="left:472.50px;top:380.94px;width:100px;text-align:center;font-size:10.7px;color:#1155cc;text-decoration:underline">1428/</div>
<div class="t" style="left:562.00px;top:315.64px;width:160px;text-align:center;font-size:10.7px;color:#000">"\\DSCLOUD\00_Processes_bi</div>
<div class="t" style="left:562.00px;top:329.94px;width:160px;text-align:center;font-size:10.7px;color:#000">m\02_Семейства\00_ЦБ\202</div>
<div class="t" style="left:562.00px;top:344.24px;width:160px;text-align:center;font-size:10.7px;color:#000">1\25_TX (ТОЛЬКО ДЛЯ</div>
<div class="t" style="left:562.00px;top:358.54px;width:160px;text-align:center;font-size:10.7px;color:#000">TX)\04_Оборудование\Общ</div>
<div class="t" style="left:562.00px;top:372.84px;width:160px;text-align:center;font-size:10.7px;color:#000">ественное</div>
<div class="t" style="left:562.00px;top:387.14px;width:160px;text-align:center;font-size:10.7px;color:#000">питание\Холодильное</div>
<div style="left:832px;top:328px;width:83px;height:58px;border-radius:7px;background:#b0d3f3"></div>
<svg style="left:902.5px;top:355.5px" width="7" height="4" viewBox="0 0 7 4"><path d="M0 0h7L3.5 3.5z" fill="#0d4cb6"/></svg>
<div class="t" style="left:797.00px;top:330.34px;width:140px;text-align:center;font-size:10.7px;color:#0d4cb6">Холодильн</div>
<div class="t" style="left:797.00px;top:344.64px;width:140px;text-align:center;font-size:10.7px;color:#0d4cb6">ое</div>
<div class="t" style="left:797.00px;top:358.94px;width:140px;text-align:center;font-size:10.7px;color:#0d4cb6">оборудова</div>
<div class="t" style="left:797.00px;top:373.24px;width:140px;text-align:center;font-size:10.7px;color:#0d4cb6">ние</div>
<div class="t" style="left:926.00px;top:346.17px;font-size:10.2px;font-weight:bold;color:#000">Шкаф холодильный двухдверный со</div>
<div class="t" style="left:926.00px;top:360.67px;font-size:10.2px;font-weight:bold;color:#000">стеклянной дверью</div>
<div class="t" style="left:1128.00px;top:338.67px;font-size:10.2px;font-weight:bold;color:#000">Шкаф холодильный двухдверный со</div>
<div class="t" style="left:1128.00px;top:353.17px;font-size:10.2px;font-weight:bold;color:#000">стеклом APACH LCRM120SD2G</div>
<div class="t" style="left:1128.00px;top:367.67px;font-size:10.2px;font-weight:bold;color:#000">1480x715x2085 (h)</div>
<div style="left:1379px;top:342px;width:117px;height:29px;border-radius:6px;background:#b0d3f3"></div>
<svg style="left:1483.5px;top:355.0px" width="7" height="4" viewBox="0 0 7 4"><path d="M0 0h7L3.5 3.5z" fill="#174ea6"/></svg>
<div class="t" style="left:1361.00px;top:345.24px;width:140px;text-align:center;font-size:10.7px;color:#174ea6">Немонтируемое</div>
<div class="t" style="left:1361.00px;top:359.44px;width:140px;text-align:center;font-size:10.7px;color:#174ea6">оборудование</div>
<div class="t" style="left:1507.00px;top:322.94px;font-size:10.7px;color:#000">Шкаф холодильный двухдверный со</div>
<div class="t" style="left:1507.00px;top:337.44px;font-size:10.7px;color:#000">стеклянной дверью. Габариты:</div>
<div class="t" style="left:1507.00px;top:351.94px;font-size:10.7px;color:#000">1480x715x2085 (h). Мощность: 0.65 кВт,</div>
<div class="t" style="left:1507.00px;top:366.44px;font-size:10.7px;color:#000">220 В. Объем 1200 л. Температурный</div>
<div class="t" style="left:1507.00px;top:380.94px;font-size:10.7px;color:#000">режим 0...+10 °C</div>
<div class="t" style="left:1722.00px;top:351.94px;width:100px;text-align:center;font-size:10.7px;color:#000">LCRM120SD2G</div>
<div style="left:58px;top:131px;width:510.5px;height:3px;background:#333"></div>
<div style="left:58px;top:194px;width:510.5px;height:3.5px;background:#333"></div>
<div style="left:58px;top:131px;width:3.5px;height:66.5px;background:#333"></div>
<div style="left:565px;top:131px;width:3.5px;height:66.5px;background:#333"></div>
<div style="left:57px;top:309px;width:511.5px;height:3px;background:#333"></div>
<div style="left:57px;top:400px;width:511.5px;height:3.5px;background:#333"></div>
<div style="left:57px;top:309px;width:4px;height:94.5px;background:#333"></div>
<div style="left:565px;top:309px;width:3.5px;height:94.5px;background:#333"></div>
<div style="left:0px;top:402px;width:1867px;height:513px;overflow:hidden"><div style="left:0px;top:-402px;width:1919px;height:957px">
<div style="left:284px;top:447.5px;width:107px;height:15.0px;border-radius:7px;background:#e6e7ea"></div>
<svg style="left:378.5px;top:453.5px" width="7" height="4" viewBox="0 0 7 4"><path d="M0 0h7L3.5 3.5z" fill="#000"/></svg>
<div style="left:406px;top:447.5px;width:63px;height:15.0px;border-radius:7px;background:#e6e7ea"></div>
<svg style="left:456.5px;top:453.5px" width="7" height="4" viewBox="0 0 7 4"><path d="M0 0h7L3.5 3.5z" fill="#000"/></svg>
<div style="left:832px;top:447.5px;width:83px;height:15.0px;border-radius:7px;background:#e6e7ea"></div>
<svg style="left:902.5px;top:453.5px" width="7" height="4" viewBox="0 0 7 4"><path d="M0 0h7L3.5 3.5z" fill="#000"/></svg>
<div style="left:1379px;top:447.5px;width:117px;height:15.0px;border-radius:7px;background:#e6e7ea"></div>
<svg style="left:1483.5px;top:453.5px" width="7" height="4" viewBox="0 0 7 4"><path d="M0 0h7L3.5 3.5z" fill="#000"/></svg>
<div style="left:284px;top:546.0px;width:107px;height:15.0px;border-radius:7px;background:#e6e7ea"></div>
<svg style="left:378.5px;top:552.0px" width="7" height="4" viewBox="0 0 7 4"><path d="M0 0h7L3.5 3.5z" fill="#000"/></svg>
<div style="left:406px;top:546.0px;width:63px;height:15.0px;border-radius:7px;background:#e6e7ea"></div>
<svg style="left:456.5px;top:552.0px" width="7" height="4" viewBox="0 0 7 4"><path d="M0 0h7L3.5 3.5z" fill="#000"/></svg>
<div style="left:832px;top:546.0px;width:83px;height:15.0px;border-radius:7px;background:#e6e7ea"></div>
<svg style="left:902.5px;top:552.0px" width="7" height="4" viewBox="0 0 7 4"><path d="M0 0h7L3.5 3.5z" fill="#000"/></svg>
<div style="left:1379px;top:546.0px;width:117px;height:15.0px;border-radius:7px;background:#e6e7ea"></div>
<svg style="left:1483.5px;top:552.0px" width="7" height="4" viewBox="0 0 7 4"><path d="M0 0h7L3.5 3.5z" fill="#000"/></svg>
<div style="left:284px;top:636.0px;width:107px;height:15.0px;border-radius:7px;background:#e6e7ea"></div>
<svg style="left:378.5px;top:642.0px" width="7" height="4" viewBox="0 0 7 4"><path d="M0 0h7L3.5 3.5z" fill="#000"/></svg>
<div style="left:406px;top:636.0px;width:63px;height:15.0px;border-radius:7px;background:#e6e7ea"></div>
<svg style="left:456.5px;top:642.0px" width="7" height="4" viewBox="0 0 7 4"><path d="M0 0h7L3.5 3.5z" fill="#000"/></svg>
<div style="left:832px;top:636.0px;width:83px;height:15.0px;border-radius:7px;background:#e6e7ea"></div>
<svg style="left:902.5px;top:642.0px" width="7" height="4" viewBox="0 0 7 4"><path d="M0 0h7L3.5 3.5z" fill="#000"/></svg>
<div style="left:1379px;top:636.0px;width:117px;height:15.0px;border-radius:7px;background:#e6e7ea"></div>
<svg style="left:1483.5px;top:642.0px" width="7" height="4" viewBox="0 0 7 4"><path d="M0 0h7L3.5 3.5z" fill="#000"/></svg>
<div style="left:284px;top:726.0px;width:107px;height:15.0px;border-radius:7px;background:#e6e7ea"></div>
<svg style="left:378.5px;top:732.0px" width="7" height="4" viewBox="0 0 7 4"><path d="M0 0h7L3.5 3.5z" fill="#000"/></svg>
<div style="left:406px;top:726.0px;width:63px;height:15.0px;border-radius:7px;background:#e6e7ea"></div>
<svg style="left:456.5px;top:732.0px" width="7" height="4" viewBox="0 0 7 4"><path d="M0 0h7L3.5 3.5z" fill="#000"/></svg>
<div style="left:832px;top:726.0px;width:83px;height:15.0px;border-radius:7px;background:#e6e7ea"></div>
<svg style="left:902.5px;top:732.0px" width="7" height="4" viewBox="0 0 7 4"><path d="M0 0h7L3.5 3.5z" fill="#000"/></svg>
<div style="left:1379px;top:726.0px;width:117px;height:15.0px;border-radius:7px;background:#e6e7ea"></div>
<svg style="left:1483.5px;top:732.0px" width="7" height="4" viewBox="0 0 7 4"><path d="M0 0h7L3.5 3.5z" fill="#000"/></svg>
<div style="left:284px;top:816.0px;width:107px;height:15.0px;border-radius:7px;background:#e6e7ea"></div>
<svg style="left:378.5px;top:822.0px" width="7" height="4" viewBox="0 0 7 4"><path d="M0 0h7L3.5 3.5z" fill="#000"/></svg>
<div style="left:406px;top:816.0px;width:63px;height:15.0px;border-radius:7px;background:#e6e7ea"></div>
<svg style="left:456.5px;top:822.0px" width="7" height="4" viewBox="0 0 7 4"><path d="M0 0h7L3.5 3.5z" fill="#000"/></svg>
<div style="left:832px;top:816.0px;width:83px;height:15.0px;border-radius:7px;background:#e6e7ea"></div>
<svg style="left:902.5px;top:822.0px" width="7" height="4" viewBox="0 0 7 4"><path d="M0 0h7L3.5 3.5z" fill="#000"/></svg>
<div style="left:1379px;top:816.0px;width:117px;height:15.0px;border-radius:7px;background:#e6e7ea"></div>
<svg style="left:1483.5px;top:822.0px" width="7" height="4" viewBox="0 0 7 4"><path d="M0 0h7L3.5 3.5z" fill="#000"/></svg>
<div style="left:284px;top:906.0px;width:107px;height:15.0px;border-radius:7px;background:#e6e7ea"></div>
<svg style="left:378.5px;top:912.0px" width="7" height="4" viewBox="0 0 7 4"><path d="M0 0h7L3.5 3.5z" fill="#000"/></svg>
<div style="left:406px;top:906.0px;width:63px;height:15.0px;border-radius:7px;background:#e6e7ea"></div>
<svg style="left:456.5px;top:912.0px" width="7" height="4" viewBox="0 0 7 4"><path d="M0 0h7L3.5 3.5z" fill="#000"/></svg>
<div style="left:832px;top:906.0px;width:83px;height:15.0px;border-radius:7px;background:#e6e7ea"></div>
<svg style="left:902.5px;top:912.0px" width="7" height="4" viewBox="0 0 7 4"><path d="M0 0h7L3.5 3.5z" fill="#000"/></svg>
<div style="left:1379px;top:906.0px;width:117px;height:15.0px;border-radius:7px;background:#e6e7ea"></div>
<svg style="left:1483.5px;top:912.0px" width="7" height="4" viewBox="0 0 7 4"><path d="M0 0h7L3.5 3.5z" fill="#000"/></svg>
</div></div>
<div style="left:1867px;top:114px;width:9px;height:801px;background:#fff"></div>
<div style="left:1867px;top:114px;width:9px;height:147px;background:#f8f9fa"></div>
<div style="left:1867px;top:114px;width:1px;height:801px;background:#dadce0"></div>
<div style="left:1867px;top:258px;width:9px;height:3px;background:#dde3ea"></div>
<div style="left:1868px;top:502px;width:7px;height:20px;border-radius:3.5px;background:#dadce0"></div>
<div style="left:1867px;top:890px;width:9px;height:24px;background:#f8f9fa"></div>
<div style="left:1867px;top:890px;width:9px;height:1px;background:#e3e3e3"></div>
<div style="left:1867px;top:903px;width:9px;height:1px;background:#e3e3e3"></div>
<svg style="left:1869px;top:894px" width="5" height="3" viewBox="0 0 5 3"><path d="M0 3H5L2.5 0z" fill="#9aa0a6"/></svg>
<svg style="left:1869px;top:908px" width="5" height="3" viewBox="0 0 5 3"><path d="M0 0H5L2.5 3z" fill="#9aa0a6"/></svg>
</div>
<div style="left:1px;top:915px;width:1875px;height:9px;background:#fff"></div>
<div style="left:1px;top:915px;width:1875px;height:1px;background:#e3e3e3"></div>
<div style="left:1px;top:916px;width:59px;height:8px;background:#f8f9fa"></div>
<div style="left:60px;top:916px;width:1px;height:8px;background:#e3e3e3"></div>
<div style="left:63px;top:916px;width:147px;height:7px;border-radius:3.5px;background:#dadce0"></div>
<div style="left:1843px;top:915px;width:1px;height:9px;background:#e3e3e3"></div>
<div style="left:1855px;top:915px;width:1px;height:9px;background:#e3e3e3"></div>
<div style="left:1867px;top:915px;width:9px;height:9px;background:#f8f9fa"></div>
<div style="left:1867px;top:915px;width:1px;height:9px;background:#e3e3e3"></div>
<svg style="left:1848px;top:917.5px" width="3" height="5" viewBox="0 0 3 5"><path d="M3 0V5L0 2.5z" fill="#9aa0a6"/></svg>
<svg style="left:1860px;top:917.5px" width="3" height="5" viewBox="0 0 3 5"><path d="M0 0V5L3 2.5z" fill="#9aa0a6"/></svg>
<div style="left:1px;top:924px;width:1875px;height:1px;background:#dadce0"></div>
<div style="left:1px;top:925px;width:1875px;height:28px;background:#f9fbfd"></div>
<div style="left:0px;top:953px;width:1919px;height:4px;background:#fff"></div>
<div style="left:46px;top:939.6px;width:9.5px;height:1.3px;background:#444746"></div>
<div style="left:50.1px;top:935.2px;width:1.3px;height:9.5px;background:#444746"></div>
<div style="left:77px;top:936px;width:11px;height:1.5px;background:#444746"></div>
<div style="left:77px;top:939.5px;width:11px;height:1.5px;background:#444746"></div>
<div style="left:77px;top:943px;width:11px;height:1.5px;background:#444746"></div>
<div class="t" style="left:119px;top:935px;font-size:11.6px;color:#444746">ИНФО</div>
<svg style="left:163px;top:939px" width="7" height="4" viewBox="0 0 7 4"><path d="M0 0h7L3.5 3.5z" fill="#444746"/></svg>
<div style="left:190px;top:931px;width:16px;height:16px;border-radius:8px 8px 8px 3px;background:#dde3ea"></div>
<div class="t" style="left:191.5px;top:935.5px;font-size:9px;color:#1f1f1f">20</div>
<div class="t" style="left:211px;top:935px;font-size:12.3px;color:#444746">Сводная картотека семейств</div>
<svg style="left:388px;top:939px" width="7" height="4" viewBox="0 0 7 4"><path d="M0 0h7L3.5 3.5z" fill="#444746"/></svg>
<div style="left:181px;top:951px;width:222px;height:2px;background:#2bd92b"></div>
<div style="left:403px;top:922px;width:185px;height:35px;background:#e1e9f7;border:3.5px solid #333;border-radius:4px"></div>
<div style="left:406.5px;top:950.5px;width:178px;height:2px;background:#2bd92b"></div>
<div style="left:415px;top:931px;width:16px;height:16px;border-radius:8px 8px 8px 2px;background:#fff"></div>
<div class="t" style="left:420px;top:936px;font-size:9px;color:#1f1f1f">4</div>
<div class="t" style="left:436px;top:936px;font-size:11.9px;font-weight:bold;color:#0b57d0">Заявки на семейства</div>
<svg style="left:570px;top:940px" width="7" height="4" viewBox="0 0 7 4"><path d="M0 0h7L3.5 3.5z" fill="#0b57d0"/></svg>
<div style="left:1755px;top:928px;width:112px;height:24px;border-radius:8px;background:#c4eed0"></div>
<div class="t" style="left:1763px;top:935px;font-size:11.4px;color:#072711">Количество: 31</div>
<svg style="left:1850px;top:939px" width="7" height="4" viewBox="0 0 7 4"><path d="M0 0h7L3.5 3.5z" fill="#072711"/></svg>
<div style="left:1876px;top:53px;width:43px;height:900px;background:#f9fbfd"></div>
<svg style="left:1891px;top:63.5px" width="15" height="15" viewBox="0 0 15 15">
<rect x="0" y="0" width="15" height="15" rx="1.5" fill="#4285f4"/>
<rect x="11.2" y="3.5" width="3.8" height="8" fill="#fbbc04"/>
<rect x="0" y="11.2" width="11.2" height="3.8" fill="#34a853"/>
<path d="M11.2 11.2H15L11.2 15z" fill="#ea4335"/>
<rect x="3.5" y="3.5" width="7.7" height="7.7" fill="#fff"/>
<text x="7.3" y="10" font-size="5.5" font-family="Liberation Sans" fill="#4285f4" text-anchor="middle">31</text>
</svg>
<svg style="left:1891px;top:107px" width="15.5" height="15.5" viewBox="0 0 15 15">
<rect x="0" y="0" width="15" height="15" rx="1.5" fill="#fbbc04"/>
<circle cx="7.5" cy="6.3" r="3" fill="#fff"/><rect x="6" y="10" width="3" height="1.3" fill="#fff"/>
</svg>
<svg style="left:1891px;top:152px" width="15" height="15" viewBox="0 0 15 15">
<circle cx="7.5" cy="7.5" r="6.2" fill="none" stroke="#1a73e8" stroke-width="2.4"/>
<path d="M4.5 7.5L7 10 13.5 3" fill="none" stroke="#1a73e8" stroke-width="2.4"/>
</svg>
<svg style="left:1892px;top:197px" width="13" height="15" viewBox="0 0 13 15">
<circle cx="6.5" cy="3.8" r="3.3" fill="#1a73e8"/><path d="M0.5 15V12Q0.5 8.5 6.5 8.5Q12.5 8.5 12.5 12V15z" fill="#1a73e8"/>
</svg>
<svg style="left:1892px;top:241px" width="13" height="17" viewBox="0 0 13 17">
<path d="M6.5 0.5A6 6 0 0 0 0.5 6.5Q0.5 10.5 6.5 16.5Q12.5 10.5 12.5 6.5A6 6 0 0 0 6.5 0.5z" fill="#34a853"/>
<path d="M6.5 0.5A6 6 0 0 1 12.5 6.5L6.5 6.5z" fill="#4285f4"/>
<path d="M0.5 6.5A6 6 0 0 1 6.5 0.5L6.5 6.5z" fill="#ea4335"/>
<path d="M0.5 6.5Q0.5 9 3 11.5L6.5 6.5z" fill="#fbbc04"/>
<circle cx="6.5" cy="6.5" r="2.3" fill="#fff"/>
</svg>
<div style="left:1891px;top:285px;width:16px;height:1px;background:#dadce0"></div>
<svg style="left:1890px;top:312px" width="17" height="16" viewBox="0 0 17 16">
<rect x="0" y="0" width="17" height="16" rx="1.5" fill="#5e4db2"/>
<rect x="2.5" y="3" width="12" height="1.5" fill="#fff"/><rect x="2.5" y="6.5" width="12" height="1.5" fill="#fff"/>
<rect x="2.5" y="10" width="4" height="3" fill="#a8c7fa"/><rect x="7.5" y="10.5" width="7" height="1.5" fill="#fff"/>
</svg>
<div style="left:1892px;top:364.5px;width:12px;height:1.6px;background:#1f1f1f"></div>
<div style="left:1897.2px;top:359.3px;width:1.6px;height:12px;background:#1f1f1f"></div>
<svg style="left:1896px;top:928px" width="7" height="9" viewBox="0 0 7 9"><path d="M1 0.8L5.2 4.5 1 8.2" fill="none" stroke="#444746" stroke-width="1.4"/></svg>
<div style="left:0px;top:23px;width:1px;height:930px;background:#1e242a"></div>
</body></html>
